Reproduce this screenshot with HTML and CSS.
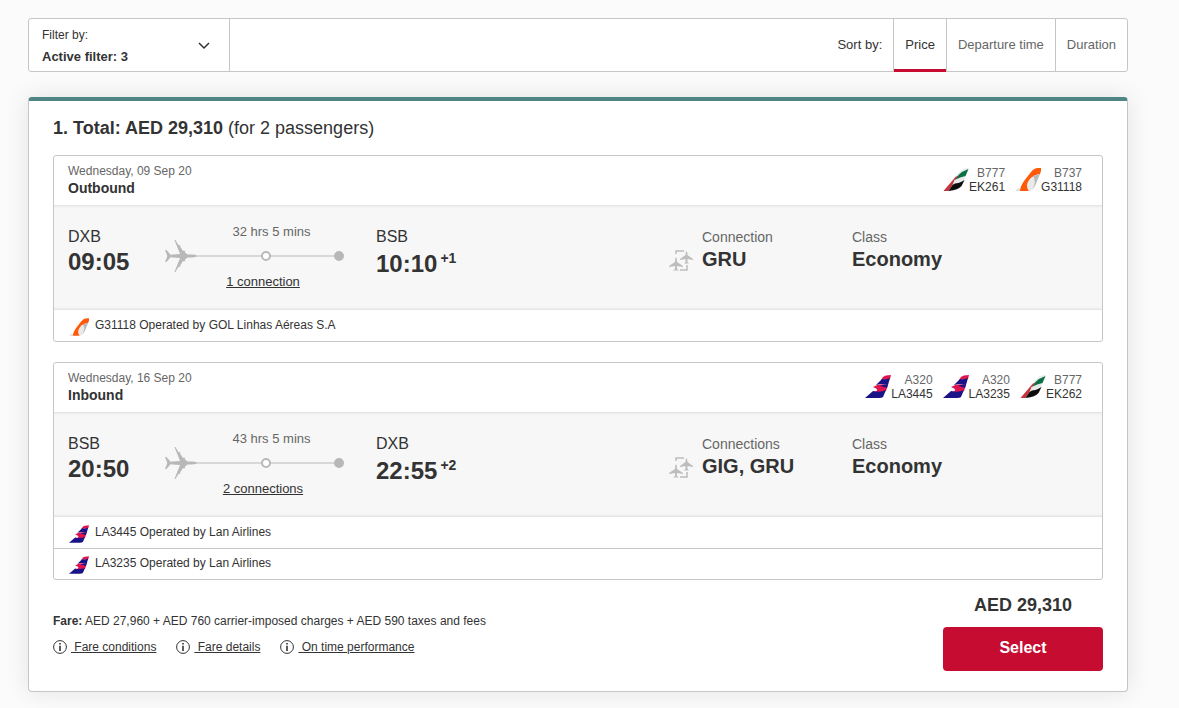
FILE: index.html
```html
<!DOCTYPE html>
<html lang="en">

<head>
    <meta charset="UTF-8" />
    <meta name="viewport" content="width=device-width, initial-scale=1.0" />
    <title>Flight results</title>
    <link rel="stylesheet" href="styles.css">
</head>

<body>
    <!-- shared icons -->
    <svg class="sprite" aria-hidden="true">
        <symbol id="ek" viewBox="0 0 25 23">
            <path d="M0 23 L15 5 Q19 0 25 0 L19 17 Q16 22 8 23 Z" fill="#e9ebea" />
            <path d="M11 12 L15 7 Q19 3 25 1 L22 8 Q17 9 11 12 Z" fill="#0b7045" />
            <path d="M0 23 L12 9 Q13 8 15 8 L11 12 L9 17 L5 23 Z" fill="#c8323c" />
            <path d="M5 23 L9 17 Q11 15 15 15 Q18 14 21 12 L18 18 Q15 22 5 23 Z" fill="#0c0c0c" />
        </symbol>
        <symbol id="g3" viewBox="0 0 26 23">
            <path d="M0 23 L4 20 L6 23 Z" fill="#dcdcdc" />
            <path d="M5 23 Q5 19 9 13 L16 4 Q19 0 23 0 H27 L25 6 Q17 7 14 13 Q11 18 14 23 Z" fill="#ff5a0a" />
            <path d="M14 23 Q10 18 14 12 Q17 8 20 9 Q22 13 19 19 Q17 23 14 23 Z" fill="#e9e9e9" />
            <path d="M18 8 L25 6 L20 18 L17 22 Q22 14 18 8 Z" fill="#b9b9b9" />
        </symbol>
        <symbol id="la" viewBox="0 0 26 23">
            <path d="M18 2 Q20 0 26 0 L25 4 L16 5 Z" fill="#e0134f" />
            <path d="M13 8 L17 4 Q21 5 25 3 L23 10 Q19 8 11 10 Z" fill="#1a1287" />
            <path d="M8 12 Q14 8 23 10 L21 16 Q15 18 9 17 Q16 15 8 12 Z" fill="#e0134f" />
            <path d="M15 11 Q19 9 23 9 L22 13 Q20 12 15 11 Z" fill="#1a1287" />
            <path d="M0 23 L8 16 Q15 18 21 15 L18 22 Q17 23 14 23 Z" fill="#1a1287" />
        </symbol>
        <symbol id="plane" viewBox="0 0 34 34">
            <path d="M34 17 Q33 18.500 29 18.500 H24 L21 21 L21.500 22.500 L19 22.500 L16 27 L16.500 28.500 L14.500 28.500 L11 34 L10 34 L16 19 L8 18.500 L6 18.300 L1.500 23.500 L0 23.500 L2.500 17 L0 10.500 L1.500 10.500 L6 15.700 L8 15.500 L16 15 L10 0 L11 0 L14.500 5.500 L16.500 5.500 L16 7 L19 11.500 L21.500 11.500 L21 13 L24 15.500 H29 Q33 15.500 34 17 Z" fill="#b8b8b8" />
        </symbol>
        <symbol id="change" viewBox="0 0 24 21">
            <path d="M7 4 V1 H15 M18 15 V20 H11" fill="none" stroke="#bdbdbd" stroke-width="1.500" />
            <path d="M7 7 Q8 8 8 12 L14 16 V17 L8 16 V19 L10 20.500 H4 L6 19 V16 L0 17 V16 L6 12 Q6 8 7 7 Z" fill="#bdbdbd" />
            <path d="M17.500 1 Q18.500 2 18.500 5 L24 9 V10 L18.500 9 V12 L20 13.500 H15 L16.500 12 V9 L11 10 V9 L16.500 5 Q16.500 2 17.500 1 Z" fill="#bdbdbd" />
        </symbol>
        <symbol id="info" viewBox="0 0 14 14">
            <circle cx="7" cy="7" r="6.400" fill="none" stroke="#333" />
            <path d="M6.200 3 H7.800 V4.600 H6.200 Z M6.200 5.800 H7.800 V11 H6.200 Z" fill="#333" />
        </symbol>
    </svg>

    <div class="page">
        <!-- filter and sort -->
        <div class="toolbar">
            <button class="filter">
                <span class="filter-text">Filter by:<b>Active filter: 3</b></span>
                <svg class="arrow" viewBox="0 0 12 8"><path d="M1 1 L6 6 L11 1" fill="none" stroke="#333" stroke-width="1.500" /></svg>
            </button>
            <div class="sort">
                <span class="sort-label">Sort by:</span>
                <button class="active">Price</button>
                <button>Departure time</button>
                <button>Duration</button>
            </div>
        </div>

        <div class="card">
            <h2>1. Total: AED 29,310 <span>(for 2 passengers)</span></h2>

            <div class="trip">
                <div class="trip-head">
                    <div>
                        <p class="date">Wednesday, 09 Sep 20</p>
                        <h3>Outbound</h3>
                    </div>
                    <ul class="flights">
                        <li><svg class="tail"><use href="#ek" /></svg><p>B777<span>EK261</span></p></li>
                        <li><svg class="tail"><use href="#g3" /></svg><p>B737<span>G31118</span></p></li>
                    </ul>
                </div>
                <div class="trip-body">
                    <div class="place">DXB<b>09:05</b></div>
                    <div class="route">
                        <p>32 hrs 5 mins</p>
                        <div class="line">
                            <svg class="plane"><use href="#plane" /></svg>
                            <i class="stop"></i>
                            <i class="end"></i>
                        </div>
                        <a href="#">1 connection</a>
                    </div>
                    <div class="place arrive">BSB<b>10:10<sup>+1</sup></b></div>
                    <div class="detail">
                        <svg class="change"><use href="#change" /></svg>
                        <p>Connection<b>GRU</b></p>
                    </div>
                    <div class="detail">
                        <p>Class<b>Economy</b></p>
                    </div>
                </div>
                <div class="operator"><svg><use href="#g3" /></svg>G31118 Operated by GOL Linhas Aéreas S.A</div>
            </div>

            <div class="trip">
                <div class="trip-head">
                    <div>
                        <p class="date">Wednesday, 16 Sep 20</p>
                        <h3>Inbound</h3>
                    </div>
                    <ul class="flights">
                        <li><svg class="tail"><use href="#la" /></svg><p>A320<span>LA3445</span></p></li>
                        <li><svg class="tail"><use href="#la" /></svg><p>A320<span>LA3235</span></p></li>
                        <li><svg class="tail"><use href="#ek" /></svg><p>B777<span>EK262</span></p></li>
                    </ul>
                </div>
                <div class="trip-body">
                    <div class="place">BSB<b>20:50</b></div>
                    <div class="route">
                        <p>43 hrs 5 mins</p>
                        <div class="line">
                            <svg class="plane"><use href="#plane" /></svg>
                            <i class="stop"></i>
                            <i class="end"></i>
                        </div>
                        <a href="#">2 connections</a>
                    </div>
                    <div class="place arrive">DXB<b>22:55<sup>+2</sup></b></div>
                    <div class="detail">
                        <svg class="change"><use href="#change" /></svg>
                        <p>Connections<b>GIG, GRU</b></p>
                    </div>
                    <div class="detail">
                        <p>Class<b>Economy</b></p>
                    </div>
                </div>
                <div class="operator"><svg><use href="#la" /></svg>LA3445 Operated by Lan Airlines</div>
                <div class="operator"><svg><use href="#la" /></svg>LA3235 Operated by Lan Airlines</div>
            </div>

            <div class="card-foot">
                <div class="fare">
                    <p><b>Fare:</b> AED 27,960 + AED 760 carrier-imposed charges + AED 590 taxes and fees</p>
                    <div class="links">
                        <span><svg><use href="#info" /></svg><a href="#">&nbsp;Fare conditions</a></span>
                        <span><svg><use href="#info" /></svg><a href="#">&nbsp;Fare details</a></span>
                        <span><svg><use href="#info" /></svg><a href="#">&nbsp;On time performance</a></span>
                    </div>
                </div>
                <div class="buy">
                    <p>AED 29,310</p>
                    <button>Select</button>
                </div>
            </div>
        </div>
    </div>
</body>

</html>
```
FILE: styles.css
```css
* {
    margin: 0;
    padding: 0;
    box-sizing: border-box;
}

body {
    background: #fbfbfb;
    color: #333;
    font: 12px/16px "Liberation Sans", Arial, sans-serif;
}

ul {
    list-style: none;
}

a {
    color: #333;
}

button {
    border: none;
    background: none;
    color: inherit;
    font: inherit;
    cursor: pointer;
}

.sprite {
    display: none;
}

.page {
    padding: 18px 51px 16px 28px;
}

/* filter and sort */
.toolbar {
    display: flex;
    justify-content: space-between;
    height: 54px;
    background: #fff;
    border: 1px solid #c6c6c6;
    border-radius: 3px;
}

.filter {
    display: flex;
    align-items: center;
    justify-content: space-between;
    width: 201px;
    padding: 2px 19px 0 13px;
    border-right: 1px solid #c6c6c6;
    text-align: left;
    line-height: 22px;
}

.filter-text b {
    display: block;
    font-size: 13px;
}

.arrow {
    width: 12px;
    height: 8px;
}

.sort {
    display: flex;
    align-items: stretch;
    font-size: 13px;
}

.sort-label {
    padding: 0 11px;
    line-height: 52px;
}

.sort button {
    padding: 0 11px;
    border-left: 1px solid #c6c6c6;
    color: #666;
}

.sort .active {
    margin-bottom: -1px;
    padding-bottom: 1px;
    color: #333;
    box-shadow: inset 0 -3px #c60c30;
}

/* result card */
.card {
    margin-top: 25px;
    padding: 16px 24px 20px;
    background: #fff;
    border: 1px solid #c6c6c6;
    border-top: 4px solid #4f8585;
    border-radius: 4px;
    box-shadow: 0 0 24px rgba(0, 0, 0, 0.1);
}

.card h2 {
    margin-bottom: 16px;
    font-size: 18px;
    line-height: 22px;
}

.card h2 span {
    font-weight: normal;
}

.trip {
    border: 1px solid #c6c6c6;
    border-radius: 3px;
}

.trip + .trip {
    margin-top: 20px;
}

.trip-head {
    display: flex;
    justify-content: space-between;
    height: 49px;
    padding: 7px 20px 0 14px;
}

.date {
    color: #666;
}

.trip-head h3 {
    font-size: 14px;
    line-height: 18px;
}

.flights {
    display: flex;
    gap: 10px;
    padding-top: 3px;
}

.flights li {
    display: flex;
}

.flights p {
    color: #666;
    line-height: 14px;
    text-align: right;
}

.flights span {
    display: block;
    color: #333;
}

.tail {
    width: 26px;
    height: 23px;
    margin-top: 2px;
}

.trip-body {
    display: grid;
    grid-template-columns: 97px 211px 1fr 183px 250px;
    height: 105px;
    padding: 18px 0 0 14px;
    background: #f7f7f7;
    box-shadow: inset 0 4px 3px -3px #ddd, inset 0 -4px 3px -3px #ddd;
}

.place {
    padding-top: 4px;
    font-size: 16px;
    line-height: 20px;
}

.place b {
    display: block;
    font-size: 24px;
    line-height: 30px;
}

.arrive b {
    line-height: 34px;
}

.place sup {
    margin-left: 3px;
    font-size: 14px;
    line-height: 14px;
}

.route {
    width: 179px;
    text-align: center;
}

.route p {
    padding-top: 1px;
    padding-left: 34px;
    color: #666;
    font-size: 13px;
    line-height: 16px;
}

.line {
    display: flex;
    align-items: center;
    justify-content: space-between;
    height: 32px;
    background: linear-gradient(#d8d8d8, #d8d8d8) 20px center / 150px 2px no-repeat;
}

.plane {
    width: 32px;
    height: 34px;
}

.stop,
.end {
    width: 10px;
    height: 10px;
    border: 2px solid #b8b8b8;
    border-radius: 50%;
    background: #fff;
}

.end {
    background: #b8b8b8;
}

.route a {
    display: block;
    padding-left: 17px;
    font-size: 13px;
    line-height: 20px;
}

.detail {
    display: flex;
    gap: 9px;
    padding-top: 4px;
}

.detail p {
    color: #666;
    font-size: 14px;
    line-height: 20px;
}

.detail b {
    display: block;
    color: #333;
    font-size: 20px;
    line-height: 24px;
}

.change {
    width: 24px;
    height: 21px;
    margin-top: 23px;
}

.operator {
    display: flex;
    gap: 6px;
    height: 31px;
    padding: 7px 15px;
}

.operator + .operator {
    padding-top: 6px;
    border-top: 1px solid #c6c6c6;
}

.operator svg {
    width: 20px;
    height: 18px;
    margin-top: 1px;
}

/* fare and select button */
.card-foot {
    display: flex;
    justify-content: space-between;
    padding-top: 15px;
}

.fare {
    padding-top: 18px;
}

.links {
    display: flex;
    gap: 20px;
    margin-top: 10px;
}

.links span {
    display: flex;
    align-items: center;
    gap: 4px;
}

.links svg {
    width: 14px;
    height: 14px;
}

.buy {
    width: 160px;
    text-align: center;
}

.buy p {
    padding-bottom: 12px;
    font-size: 18px;
    font-weight: bold;
    line-height: 20px;
}

.buy button {
    width: 100%;
    height: 44px;
    padding-bottom: 2px;
    background: #c60c30;
    border-radius: 4px;
    color: #fff;
    font-size: 16px;
    font-weight: bold;
}
```
